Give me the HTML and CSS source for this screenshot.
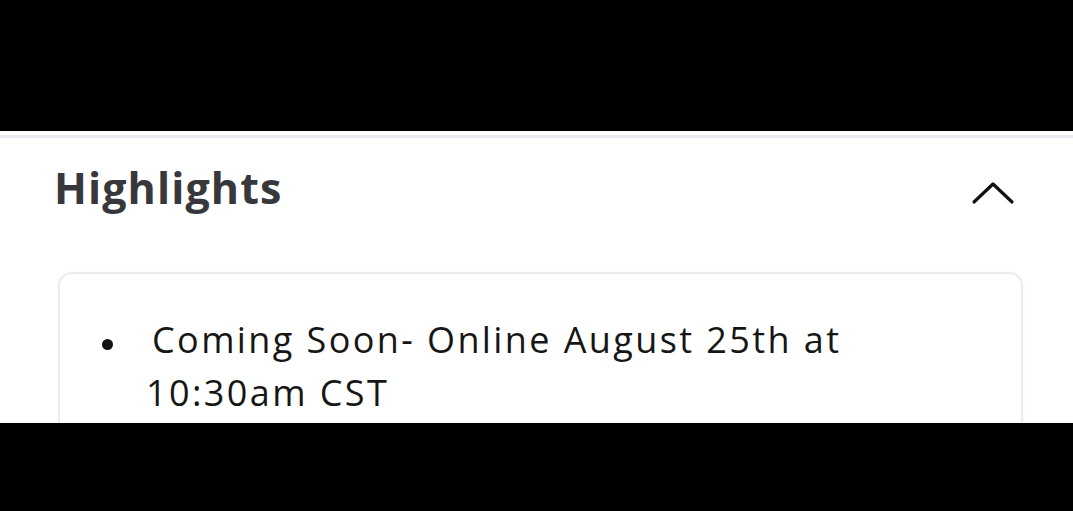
FILE: index.html
```html
<!DOCTYPE html>
<html lang="en">

<head>
    <meta charset="UTF-8">
    <meta name="viewport" content="width=device-width, initial-scale=1.0">
    <title>Highlights</title>
    <link rel="stylesheet" href="styles.css">
</head>

<body>
    <div class="band band-top"></div>

    <div class="screen">
        <div class="divider"></div>

        <!-- Highlights section -->
        <section class="section">
            <div class="section-header">
                <h2>Highlights</h2>
                <svg class="chevron" width="44" height="26" viewBox="0 0 44 26">
                    <polyline points="3,22 22,4 41,22" fill="none" stroke="#111" stroke-width="3.2"
                        stroke-linecap="round" stroke-linejoin="round" />
                </svg>
            </div>

            <div class="card">
                <ul class="highlight-list">
                    <li><span class="lead">Coming Soon- Online August 25th at</span> 10:30am CST</li>
                </ul>
            </div>
        </section>
    </div>

    <div class="band band-bottom"></div>
</body>

</html>
```

FILE: styles.css
```css
body {
    margin: 0;
    width: 1073px;
    height: 511px;
    display: flex;
    flex-direction: column;
    background-color: #000;
    font-family: "Open Sans", Lato, sans-serif;
    overflow: hidden;
}

.band {
    background-color: #000;
}

.band-top {
    height: 131px;
}

.band-bottom {
    flex: 1;
}

.screen {
    height: 292px;
    background: #FFFFFF;
    overflow: hidden;
}

.divider {
    height: 3px;
    margin-top: 4px;
    background-color: #e7ebf1;
}

.section {
    padding: 0 50px 0 58px;
}

.section-header {
    display: flex;
    align-items: flex-start;
    justify-content: space-between;
    height: 134px;
}

h2 {
    margin: 20px 0 0 -4px;
    font-size: 43px;
    font-weight: 700;
    letter-spacing: 1.1px;
    color: #38383c;
}

.chevron {
    margin: 42px 8px 0 0;
}

.card {
    height: 200px;
    border: 2px solid #ececec;
    border-radius: 14px;
    box-shadow: 0 0 3px rgba(0, 0, 0, 0.05);
    padding: 39px 30px 0 42px;
}

.highlight-list {
    margin: 0;
    padding: 0;
    list-style: none;
}

.highlight-list li {
    font-size: 36px;
    line-height: 53px;
    letter-spacing: 2.4px;
    color: #161616;
    padding-left: 44px;
    position: relative;
}

.highlight-list li::before {
    content: "";
    position: absolute;
    left: 0;
    top: 26px;
    width: 11px;
    height: 11px;
    border-radius: 50%;
    background-color: #111;
}

.lead {
    display: block;
    padding-left: 6px;
}
```
